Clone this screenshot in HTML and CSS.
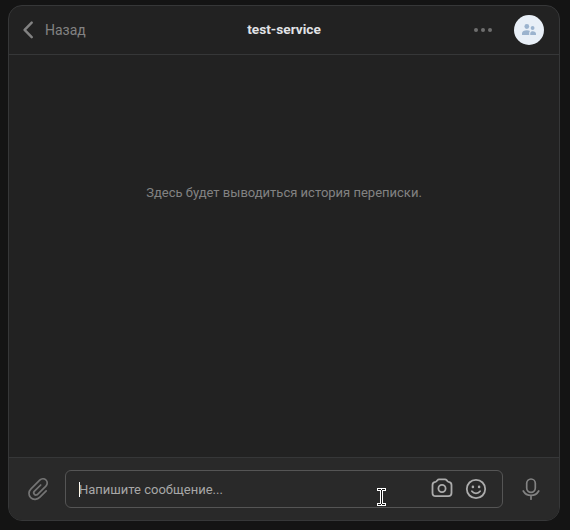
FILE: index.html
```html
<!DOCTYPE html>
<html lang="ru">
<head>
<meta charset="utf-8">
<title>test-service</title>
<link rel="stylesheet" href="styles.css">
</head>
<body>
<main class="chat">
  <header class="header">
    <div class="back">
      <svg width="10" height="18" viewBox="0 0 10 18"><path d="M8.7 1.6 1.6 8.9 8.7 16.2"/></svg>
      <span>Назад</span>
    </div>
    <h1 class="title">test-service</h1>
    <div class="actions">
      <svg class="more" width="18" height="4" viewBox="0 0 18 4"><circle cx="2" cy="2" r="2"/><circle cx="9" cy="2" r="2"/><circle cx="16" cy="2" r="2"/></svg>
      <div class="avatar">
        <svg width="14" height="11" viewBox="0 0 14 11"><circle cx="4.8" cy="2.5" r="2.4"/><circle cx="10.6" cy="4" r="1.9"/><path d="M0 11V9.2C0 7.2 2.3 6.2 4.8 6.2c1.4 0 2.5.3 3.3.9-.8.7-1.1 1.7-.8 3.9zM8.3 11c-.2-1.6 0-2.6.8-3.3.5-.3 1-.4 1.6-.4 1.900 0 3.300.9 3.300 2.400V11z"/></svg>
      </div>
    </div>
  </header>
  <section class="history"><p class="empty">Здесь будет выводиться история переписки.</p></section>
  <footer class="composer">
    <svg class="clip" width="24" height="26" viewBox="0 0 24 26"><path d="M20.200 14.800 13.900 21.200C11.300 23.800 7.200 24.200 4.700 21.700 2.200 19.200 2.500 15.400 5 12.900L13.700 4.200C15.500 2.400 18.300 2.300 20 4c1.700 1.700 1.600 4.400-.1 6.100L11.600 18.300c-.9.9-2.300 1-3.200.1-.9-.9-.8-2.300.1-3.200L14.700 9"/></svg>
    <div class="field">
      <span class="caret"></span>
      <span class="placeholder">Напишите сообщение...</span>
      <svg class="camera" width="22" height="20" viewBox="0 0 22 20"><path d="M8 1.400h6c.7 0 1.100.2 1.600.8l.9 1.100c.3.400.6.500 1.100.6 2 .3 2.900 1.300 2.900 3.200v7.900c0 2-1.200 3.200-3.200 3.200H4.700c-2 0-3.200-1.200-3.200-3.200V7.100c0-1.900.9-2.900 2.900-3.200.5-.1.8-.2 1.100-.6l.9-1.100c.5-.6.9-.8 1.600-.8z"/><circle cx="11" cy="10.500" r="3.600"/></svg>
      <svg class="smile" width="22" height="22" viewBox="0 0 22 22"><circle cx="11" cy="11" r="9.200"/><path d="M6.900 13.300c2 2.700 6.200 2.700 8.200 0"/><circle class="eye" cx="7.900" cy="8.900" r="1.300"/><circle class="eye" cx="14.100" cy="8.900" r="1.300"/></svg>
    </div>
    <svg class="mic" width="18" height="22" viewBox="0 0 18 22"><rect x="4.700" y="1" width="8.600" height="13.300" rx="4.300"/><path d="M1.300 13c3.300 5.900 12.100 5.900 15.400 0M9 17.500v3.700"/></svg>
  </footer>
</main>
<svg class="cursor" width="9" height="18" viewBox="0 0 9 18"><path class="outline" d="M0 0h9v3H6v12h3v3H0v-3h3V3H0z"/><path d="M1 1h3v1h1V1h3v1H5v14h3v1H5v-1H4v1H1v-1h3V2H1z"/></svg>
</body>
</html>
```
FILE: styles.css
```css
* { box-sizing: border-box; }
body {
  margin: 0;
  padding: 5px 10px 9px 8px;
  height: 530px;
  overflow: hidden;
  background: #141414;
  font-family: Roboto, "Noto Sans", sans-serif;
  font-size: 13px;
}
svg { display: block; flex: none; fill: none; stroke-linecap: round; stroke-linejoin: round; }
.chat {
  display: flex;
  flex-direction: column;
  height: 516px;
  border: 1px solid #363738;
  border-radius: 14px;
  background: #222;
  overflow: hidden;
}
.header {
  display: grid;
  grid-template-columns: 1fr auto 1fr;
  align-items: center;
  height: 49px;
  padding: 0 15px 0 14px;
  border-bottom: 1px solid #363738;
}
.back { display: flex; align-items: center; gap: 12px; color: #828282; font-size: 14px; }
.back svg { stroke: #828282; stroke-width: 2.4; }
.title { margin: 0 0 2px; padding-left: 1px; color: #e1e3e6; font-size: 13.7px; font-weight: 700; line-height: 18px; }
.actions { display: flex; align-items: center; justify-content: flex-end; gap: 22px; }
.more { fill: #6e6e6e; }
.avatar {
  display: flex;
  align-items: center;
  justify-content: center;
  width: 30px;
  height: 30px;
  padding-bottom: 1px;
  border-radius: 50%;
  background: #e8eff7;
}
.avatar svg { fill: #9bb3ce; }
.history { flex: 1; padding-top: 128px; text-align: center; }
.empty { margin: 0; color: #828282; line-height: 20px; }
.composer {
  display: flex;
  align-items: center;
  height: 63px;
  padding: 0 18px 0 17px;
  border-top: 1px solid #363738;
  background: #292929;
}
.clip { stroke: #747474; stroke-width: 1.7; }
.field {
  display: flex;
  flex: none;
  align-items: center;
  width: 438px;
  height: 38px;
  margin: 0 19px 0 15px;
  padding: 0 15px 0 13px;
  border: 1px solid #555;
  border-radius: 6px;
}
.field svg { stroke: #acacac; stroke-width: 1.8; }
.field .camera { margin-bottom: 2px; }
.caret { width: 1px; height: 15px; margin-right: -1px; background: #fff; }
.placeholder { flex: 1; color: #a7a7a7; }
.field .smile { margin-left: 12px; }
.field .eye { fill: #acacac; stroke: none; }
.mic { stroke: #828282; stroke-width: 1.7; }
.cursor { position: absolute; left: 377px; top: 488px; fill: #111; }
.cursor .outline { fill: #fff; }
```
